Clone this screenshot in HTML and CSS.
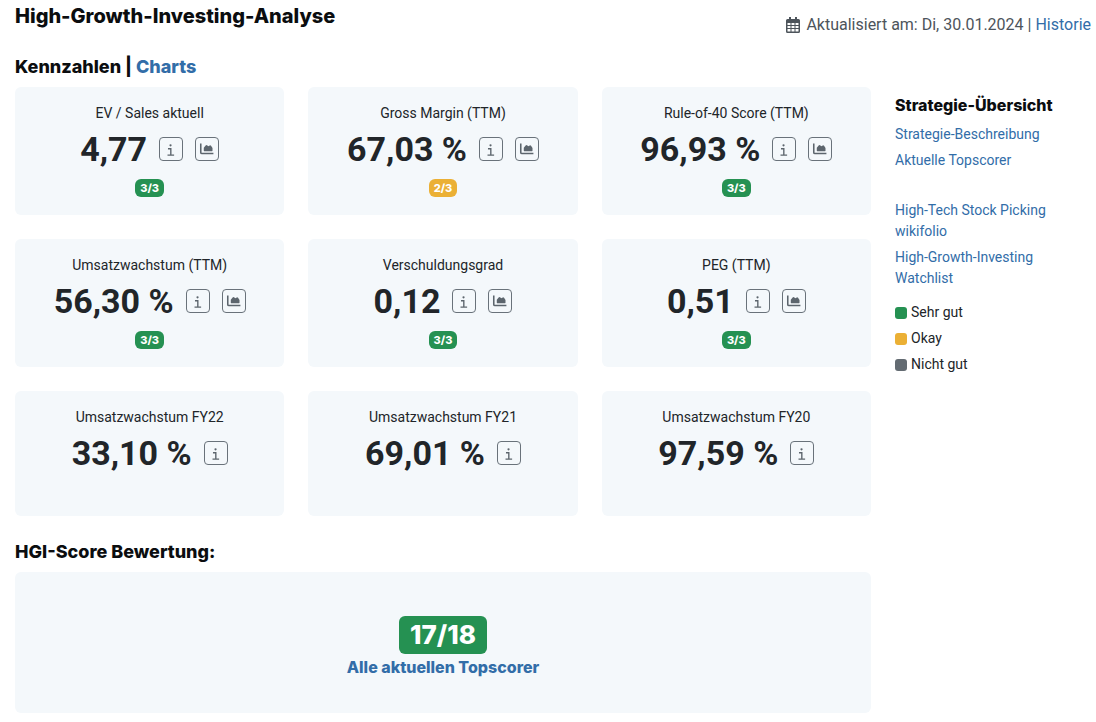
FILE: index.html
```html
<!DOCTYPE html>
<html lang="de">
<head>
<meta charset="utf-8">
<meta name="viewport" content="width=device-width, initial-scale=1">
<title>High-Growth-Investing-Analyse</title>
<link rel="stylesheet" href="styles.css">
</head>
<body>
<svg class="sprite" aria-hidden="true">
  <symbol id="info" viewBox="0 0 24 24">
    <path d="M8.700 11.700h3.100v7M8.200 18.700h7.200" fill="none" stroke="currentColor" stroke-width="1.500"/>
    <circle cx="11.500" cy="8" r="1.200" fill="currentColor"/>
  </symbol>
  <symbol id="chart" viewBox="0 0 24 24">
    <path d="M5.200 6v9.700q0 1.300 1.300 1.300H19" fill="none" stroke="currentColor" stroke-width="1.700"/>
    <path d="M8.500 14v-3.500l2-2.300q.7-.7 1.500-.3l1.500 1.100 1.500-.9q.8-.3 1.400.4l1.600 2.500v3q0 .5-.5.5h-8.500q-.5 0-.5-.5z" fill="currentColor"/>
  </symbol>
</svg>
<div class="page">
  <header class="page-header">
    <h1 class="title">High-Growth-Investing-Analyse</h1>
    <p class="updated">
      <svg class="calendar" viewBox="0 0 14 16" aria-hidden="true">
        <path fill="currentColor" fill-rule="evenodd" d="M3 0h2v2h4V0h2v2h1.500A1.500 1.500 0 0 1 14 3.500v11a1.500 1.500 0 0 1-1.500 1.500h-11A1.500 1.500 0 0 1 0 14.500v-11A1.500 1.500 0 0 1 1.500 2H3zM1.500 6v2h3V6zM5.500 6v2h3V6zM9.500 6v2h3V6zM1.500 9v2h3V9zM5.500 9v2h3V9zM9.500 9v2h3V9zM1.500 12v2.500h3V12zM5.500 12v2.500h3V12zM9.500 12v2.500h3V12z"/>
      </svg>
      <span>Aktualisiert am: Di, 30.01.2024 | <a href="#historie">Historie</a></span>
    </p>
  </header>
  <div class="columns">
    <main class="main">
      <h2 class="heading">Kennzahlen <span class="divider">|</span> <a href="#charts">Charts</a></h2>
      <div class="cards">
        <section class="card">
          <h3 class="label">EV / Sales aktuell</h3>
          <div class="row"><span class="value">4,77</span><button class="tool" aria-label="Information"><svg><use href="#info"/></svg></button><button class="tool" aria-label="Chart"><svg><use href="#chart"/></svg></button></div>
          <span class="badge">3/3</span>
        </section>
        <section class="card">
          <h3 class="label">Gross Margin (TTM)</h3>
          <div class="row"><span class="value">67,03 %</span><button class="tool" aria-label="Information"><svg><use href="#info"/></svg></button><button class="tool" aria-label="Chart"><svg><use href="#chart"/></svg></button></div>
          <span class="badge okay">2/3</span>
        </section>
        <section class="card">
          <h3 class="label">Rule-of-40 Score (TTM)</h3>
          <div class="row"><span class="value">96,93 %</span><button class="tool" aria-label="Information"><svg><use href="#info"/></svg></button><button class="tool" aria-label="Chart"><svg><use href="#chart"/></svg></button></div>
          <span class="badge">3/3</span>
        </section>
        <section class="card">
          <h3 class="label">Umsatzwachstum (TTM)</h3>
          <div class="row"><span class="value">56,30 %</span><button class="tool" aria-label="Information"><svg><use href="#info"/></svg></button><button class="tool" aria-label="Chart"><svg><use href="#chart"/></svg></button></div>
          <span class="badge">3/3</span>
        </section>
        <section class="card">
          <h3 class="label">Verschuldungsgrad</h3>
          <div class="row"><span class="value">0,12</span><button class="tool" aria-label="Information"><svg><use href="#info"/></svg></button><button class="tool" aria-label="Chart"><svg><use href="#chart"/></svg></button></div>
          <span class="badge">3/3</span>
        </section>
        <section class="card">
          <h3 class="label">PEG (TTM)</h3>
          <div class="row"><span class="value">0,51</span><button class="tool" aria-label="Information"><svg><use href="#info"/></svg></button><button class="tool" aria-label="Chart"><svg><use href="#chart"/></svg></button></div>
          <span class="badge">3/3</span>
        </section>
        <section class="card plain">
          <h3 class="label">Umsatzwachstum FY22</h3>
          <div class="row"><span class="value">33,10 %</span><button class="tool" aria-label="Information"><svg><use href="#info"/></svg></button></div>
        </section>
        <section class="card plain">
          <h3 class="label">Umsatzwachstum FY21</h3>
          <div class="row"><span class="value">69,01 %</span><button class="tool" aria-label="Information"><svg><use href="#info"/></svg></button></div>
        </section>
        <section class="card plain">
          <h3 class="label">Umsatzwachstum FY20</h3>
          <div class="row"><span class="value">97,59 %</span><button class="tool" aria-label="Information"><svg><use href="#info"/></svg></button></div>
        </section>
      </div>
      <h2 class="heading score-heading">HGI-Score Bewertung:</h2>
      <section class="score">
        <span class="total">17/18</span>
        <a class="topscorer" href="#topscorer">Alle aktuellen Topscorer</a>
      </section>
    </main>
    <aside class="side">
      <h2 class="side-heading">Strategie-Übersicht</h2>
      <ul class="links">
        <li><a href="#beschreibung">Strategie-Beschreibung</a></li>
        <li><a href="#topscorer">Aktuelle Topscorer</a></li>
      </ul>
      <ul class="links external">
        <li><a href="#wikifolio">High-Tech Stock Picking wikifolio</a></li>
        <li><a href="#watchlist">High-Growth-Investing Watchlist</a></li>
      </ul>
      <ul class="links legend">
        <li><span class="dot"></span>Sehr gut</li>
        <li><span class="dot okay"></span>Okay</li>
        <li><span class="dot bad"></span>Nicht gut</li>
      </ul>
    </aside>
  </div>
</div>
</body>
</html>
```
FILE: styles.css
```css
* { box-sizing: border-box; }
body { margin: 0; background: #fff; color: #212529; font: 14px/21px Roboto, sans-serif; }
h1, h2, h3, p, ul { margin: 0; padding: 0; }
a { color: #326da8; text-decoration: none; }
.sprite { display: none; }
.page { padding: 4px 5px 9px 15px; }
.page-header { display: flex; justify-content: space-between; align-items: flex-start; min-height: 51px; }
.title { color: #0b0d0f; font: 800 20px/24px Inter, sans-serif; }
.updated { display: flex; align-items: center; gap: 6px; padding-top: 9px; color: #4d545b; font-size: 16px; line-height: 24px; }
.calendar { width: 14px; height: 16px; }
.columns { display: grid; grid-template-columns: minmax(0, 1fr) 196px; gap: 24px; }
.heading { color: #0b0d0f; font: 800 18px/24px Inter, sans-serif; }
.divider { line-height: 20px; }
.cards { display: grid; grid-template-columns: repeat(3, minmax(0, 1fr)); gap: 24px; padding-top: 8px; }
.card { display: flex; flex-direction: column; align-items: center; padding: 16px 12px 18px; border-radius: 6px; background: #f4f8fb; }
.card.plain { padding-bottom: 38px; }
.label { font-size: 14px; font-weight: 400; line-height: 21px; }
.row { display: flex; align-items: center; gap: 12px; height: 50px; }
.value { font-size: 34px; font-weight: 700; line-height: 42px; }
.tool { width: 24px; height: 24px; padding: 0; border: 1px solid #69727a; border-radius: 4px; background: transparent; color: #5c656d; }
.tool svg { display: block; width: 22px; height: 22px; }
.badge { margin-top: 5px; padding: 0 5px; border-radius: 6px; background: #259152; color: #fff; font: 800 11px/18px Inter, sans-serif; }
.badge.okay, .dot.okay { background: #ebb035; }
.score-heading { padding-top: 24px; }
.score { display: flex; flex-direction: column; align-items: center; margin-top: 8px; padding: 44px 12px 33px; border-radius: 6px; background: #f4f8fb; }
.total { padding: 0 11px; border-radius: 6px; background: #259152; color: #fff; font: 800 26px/38px Inter, sans-serif; }
.topscorer { font: 800 16px/26px Inter, sans-serif; }
.side { padding-top: 40px; }
.side-heading { color: #0b0d0f; font: 800 16px/20px Inter, sans-serif; }
.links { display: grid; gap: 5px; padding-top: 9px; list-style: none; }
.external { padding-top: 29px; }
.legend { padding-top: 13px; }
.legend li { display: flex; align-items: center; gap: 4px; }
.dot { width: 12px; height: 12px; border-radius: 3px; background: #259152; }
.dot.bad { background: #636b72; }
```
